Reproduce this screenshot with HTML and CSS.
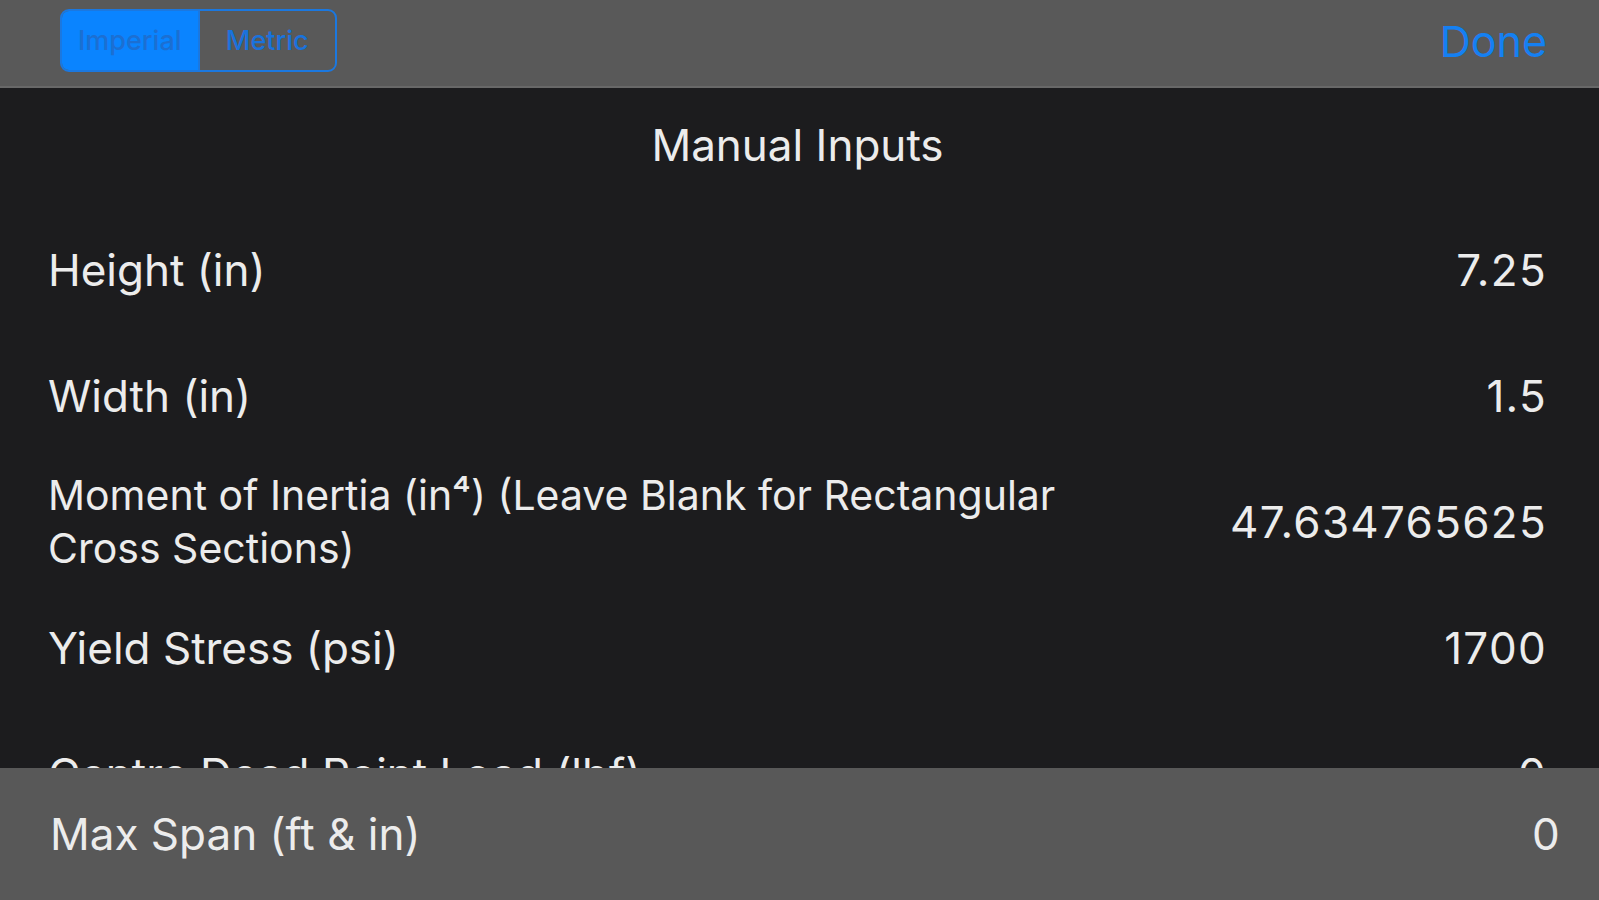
FILE: index.html
```html
<!DOCTYPE html>
<html lang="en">
<head>
<meta charset="utf-8">
<title>Manual Inputs</title>
<link rel="stylesheet" href="styles.css">
</head>
<body>
<div class="screen">
  <header class="topbar">
    <div class="segmented">
      <div class="seg seg-active">Imperial</div>
      <div class="seg">Metric</div>
    </div>
    <div class="done">Done</div>
  </header>
  <main class="content">
    <h1 class="title">Manual Inputs</h1>
    <div class="row">
      <div class="label">Height (in)</div>
      <div class="value">7.25</div>
    </div>
    <div class="row">
      <div class="label">Width (in)</div>
      <div class="value">1.5</div>
    </div>
    <div class="row">
      <div class="label label-long">Moment of Inertia (in⁴) (Leave Blank for Rectangular Cross Sections)</div>
      <div class="value">47.634765625</div>
    </div>
    <div class="row">
      <div class="label">Yield Stress (psi)</div>
      <div class="value">1700</div>
    </div>
    <div class="row">
      <div class="label">Centre Dead Point Load (lbf)</div>
      <div class="value">0</div>
    </div>
  </main>
  <footer class="footer">
    <div class="label">Max Span (ft &amp; in)</div>
    <div class="value">0</div>
  </footer>
</div>
</body>
</html>
```
FILE: styles.css
```css
html, body {
  margin: 0;
  padding: 0;
  background: #1c1c1e;
}
body {
  font-family: Inter, "Liberation Sans", sans-serif;
  color: #ececec;
}
.screen {
  width: 1599px;
  height: 900px;
  display: flex;
  flex-direction: column;
  overflow: hidden;
}
.topbar {
  flex: 0 0 88px;
  box-sizing: border-box;
  background: #595959;
  border-bottom: 2px solid #686868;
  display: flex;
  align-items: flex-start;
  justify-content: space-between;
  padding: 9px 52px 0 60px;
}
.segmented {
  display: flex;
  width: 277px;
  height: 63px;
  box-sizing: border-box;
  border: 2px solid #1b78e0;
  border-radius: 9px;
  overflow: hidden;
}
.seg {
  flex: 1 1 0;
  display: flex;
  align-items: center;
  justify-content: center;
  font-size: 27px;
  font-weight: 500;
  color: #1a72dc;
}
.seg-active {
  background: #0a84ff;
  color: #1c6fd2;
  border-right: 2px solid #1b78e0;
}
.done {
  font-size: 43px;
  color: #1580f2;
  line-height: 62px;
  margin-top: 1px;
}
.content {
  flex: 1 1 auto;
  min-height: 0;
  overflow: hidden;
  padding: 0 52px 0 48px;
}
.title {
  margin: 0;
  padding: 31px 0 36px;
  text-align: center;
  font-weight: 400;
  font-size: 44px;
  line-height: 52px;
  color: #ececec;
}
.row {
  display: flex;
  align-items: center;
  justify-content: space-between;
  min-height: 126px;
  font-size: 44px;
  line-height: 53px;
}
.label {
  flex: 0 1 1070px;
}
.label-long {
  font-size: 41px;
}
.value {
  flex: 0 0 auto;
  text-align: right;
  letter-spacing: 1.3px;
}
.footer {
  flex: 0 0 132px;
  background: #585858;
  display: flex;
  align-items: center;
  justify-content: space-between;
  padding: 0 38px 0 50px;
  font-size: 44px;
  line-height: 53px;
}
```
